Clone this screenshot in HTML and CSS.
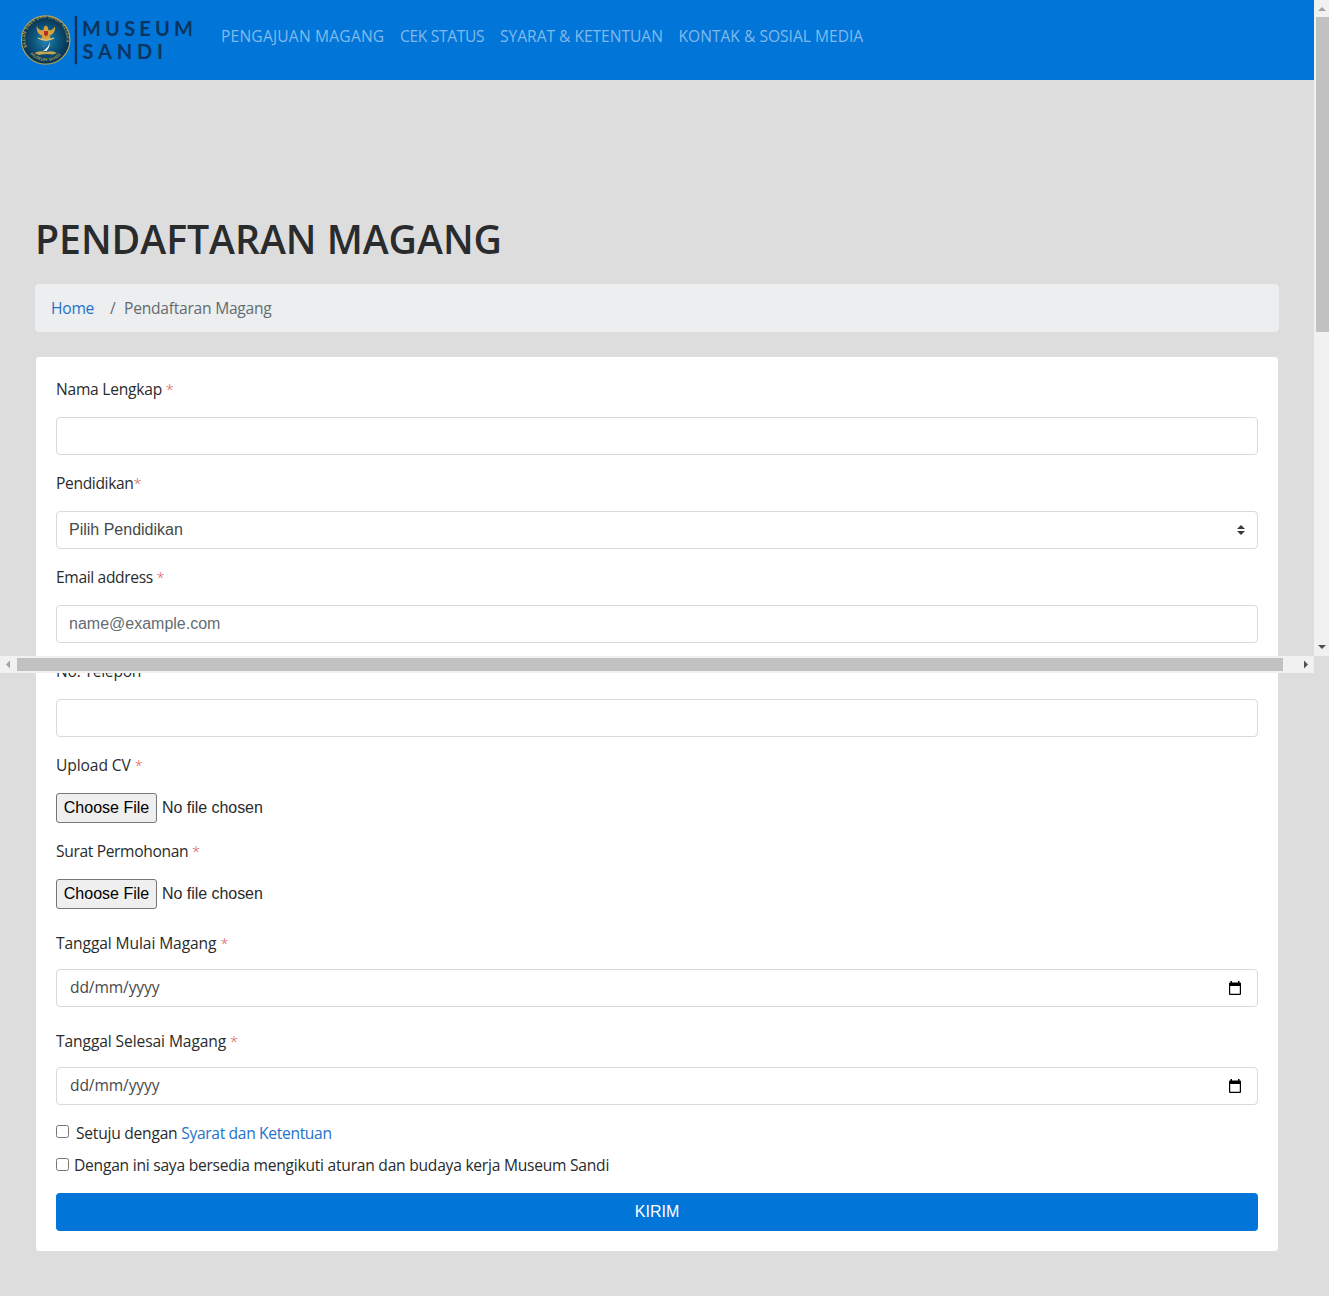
FILE: index.html
```html
<!DOCTYPE html>
<html lang="id">
<head>
<meta charset="utf-8">
<title>Pendaftaran Magang - Museum Sandi</title>
<link rel="stylesheet" href="styles.css">
</head>
<body>
<header class="navbar">
  <svg class="brand" width="176" height="56" viewBox="20 12 176 56" role="img" aria-label="Museum Sandi">
    <defs>
      <radialGradient id="seal"><stop offset="0" stop-color="#2386b5"/><stop offset=".5" stop-color="#0d567e"/><stop offset="1" stop-color="#092f4e"/></radialGradient>
      <path id="arcTop" d="M27 47 A20.5 20.5 0 1 1 64.500 47"/>
      <path id="arcBottom" d="M30 54 A21.5 21.5 0 0 0 62 54"/>
    </defs>
    <circle cx="45.7" cy="40" r="24.2" fill="url(#seal)" stroke="#a9a45b" stroke-width="1.2"/>
    <circle cx="45.7" cy="40" r="22.8" fill="none" stroke="#143b4e" stroke-width=".8"/>
    <text class="seal-text"><textPath href="#arcTop" textLength="76">BADAN SIBER DAN SANDI NEGARA</textPath></text>
    <text class="seal-text"><textPath href="#arcBottom" textLength="34">MUSEUM SANDI</textPath></text>
    <path d="M36.8 26 C38 29.5 41 31 43.5 30 L44 27 L45 25.8 L47 26 L48 28 L48.3 30 C51 31 54 29 55 26 C55.7 31 53 35 49.5 35.5 L51 39 L46 41 L41 39 L42.5 35.5 C38.5 35 36 31 36.8 26Z" fill="#d8a13a"/>
    <path d="M44 31h4v3.5l-2 2-2-2z" fill="#b92d29"/>
    <path d="M38 38 Q46 42.5 54 38" fill="none" stroke="#d7c78b" stroke-width="1.2"/>
    <path d="M50 41.5 Q49 47 43 51 L46.5 51 Q50 47 50 41.5Z" fill="#eef6f4"/>
    <path d="M41.5 46l3-1.5v3z" fill="#4b77aa"/>
    <path d="M34.5 53 Q39 50 45.7 52 Q52 50 57 53 L53 54.5 Q46 53.5 39 55Z" fill="#c6a750"/>
    <rect x="74.7" y="16" width="2.4" height="48.2" fill="#0b3560"/>
    <text class="brand-text" x="82" y="36" textLength="111">MUSEUM</text>
    <text class="brand-text" x="82.5" y="58.600" textLength="80.500">SANDI</text>
  </svg>
  <nav class="nav">
    <a class="n1">PENGAJUAN MAGANG</a>
    <a class="n2">CEK STATUS</a>
    <a class="n3">SYARAT &amp; KETENTUAN</a>
    <a class="n4">KONTAK &amp; SOSIAL MEDIA</a>
  </nav>
</header>
<main class="content">
  <h1>PENDAFTARAN MAGANG</h1>
  <div class="breadcrumb"><a class="home">Home</a><span class="slash">/</span><span class="here">Pendaftaran Magang</span></div>
  <form class="card">
    <div class="group"><label>Nama Lengkap <i>*</i></label><input class="control" type="text"></div>
    <div class="group"><label class="snug">Pendidikan<i>*</i></label>
      <div class="control select">Pilih Pendidikan<svg width="8" height="10" viewBox="0 0 4 5"><path fill="#343a40" d="M2 0L0 2h4zm0 5L0 3h4z"/></svg></div></div>
    <div class="group"><label class="snug">Email address <i>*</i></label><input class="control" type="text" placeholder="name@example.com"></div>
    <div class="group"><label>No. Telepon</label><input class="control" type="text"></div>
    <div class="group"><label class="loose">Upload CV <i>*</i></label><input class="file" type="file"></div>
    <div class="group"><label class="snug">Surat Permohonan <i>*</i></label><input class="file" type="file"></div>
    <div class="group dated"><label class="loose">Tanggal Mulai Magang <i>*</i></label>
      <div class="control date"><span>dd/mm/yyyy</span><svg width="14" height="15" viewBox="0 0 14 15"><path fill="#000" fill-rule="evenodd" d="M2.5 0h1.5v1.5h6V0h1.5v1.5H12q1 0 1 1V13q0 1-1 1H2q-1 0-1-1V2.5q0-1 1-1h.5zM2.2 5v7.8h9.6V5z"/></svg></div></div>
    <div class="group dated"><label class="loose">Tanggal Selesai Magang <i>*</i></label>
      <div class="control date"><span>dd/mm/yyyy</span><svg width="14" height="15" viewBox="0 0 14 15"><path fill="#000" fill-rule="evenodd" d="M2.5 0h1.5v1.5h6V0h1.5v1.5H12q1 0 1 1V13q0 1-1 1H2q-1 0-1-1V2.5q0-1 1-1h.5zM2.2 5v7.8h9.6V5z"/></svg></div></div>
    <div class="check agree"><input type="checkbox"><span>Setuju dengan <a>Syarat dan Ketentuan</a></span></div>
    <div class="check rules"><input type="checkbox"><span>Dengan ini saya bersedia mengikuti aturan dan budaya kerja Museum Sandi</span></div>
    <button class="submit" type="button">KIRIM</button>
  </form>
</main>
<div class="vbar"><svg width="15" height="17"><path d="M3 11h8L7 7z" fill="#a3a3a3"/></svg><div class="vthumb"></div><svg class="end" width="15" height="17"><path d="M3 6h8l-4 4z" fill="#505050"/></svg></div>
<div class="hbar"><svg width="17" height="17"><path d="M10 4.500v8L6 8.500z" fill="#a3a3a3"/></svg><div class="hthumb"></div><svg class="end" width="17" height="17"><path d="M7 4.500v8l4-4z" fill="#505050"/></svg></div>
</body>
</html>
```
FILE: styles.css
```css
* { box-sizing: border-box; }
html, body { margin: 0; height: 1296px; overflow: hidden; }
body {
  position: relative;
  background: #ddd;
  color: #292b2c;
  font: 15.6px/24px "Open Sans", sans-serif;
  letter-spacing: -.24px;
}
.navbar {
  width: 1314px; height: 80px;
  background: #0275d8;
  display: flex;
  padding: 12px 20px;
}
.brand { flex: none; letter-spacing: 0; }
.brand-text { font: 700 20px Lato, sans-serif; fill: #0b3560; }
.seal-text { font: 700 4px Lato, sans-serif; fill: #b3a452; }
.nav { display: flex; padding-left: 25px; padding-top: 12px; color: #81baec; letter-spacing: 0; }
.nav a { white-space: nowrap; flex: none; }
.n1 { width: 179px; letter-spacing: .19px; }
.n2 { width: 100px; letter-spacing: -.34px; }
.n3 { width: 178.500px; letter-spacing: -.03px; }
.content { width: 1314px; padding: 135px 35px 0; }
h1 { margin: 0; height: 69px; font-size: 39.200px; line-height: 48px; font-weight: 600; letter-spacing: -.03px; white-space: nowrap; }
.breadcrumb { height: 48px; padding: 12px 16px; background: #eceeef; border-radius: 4px; display: flex; color: #636c72; }
.breadcrumb a, .check a { color: #2472cb; }
.home { width: 59px; }
.slash { width: 14px; }
.card { margin: 24px 0 0; height: 896px; padding: 20px; background: #fff; border: 1px solid #dcdddd; border-radius: 4px; }
.group { display: flex; flex-direction: column; margin-bottom: 16px; }
.group label { height: 24px; margin-bottom: 16px; white-space: pre; }
.group .snug { letter-spacing: -.35px; }
.group .loose { letter-spacing: -.1px; }
.group i { color: #d9534f; font-style: normal; font-size: 14.500px; font-weight: 300; }
.control {
  display: flex; align-items: center; justify-content: space-between;
  width: 100%; height: 38px; padding: 0 12px;
  border: 1px solid #d8d9da; border-radius: 4px; background: #fff;
  font: 16px "Liberation Sans", sans-serif; letter-spacing: 0; color: #464a4c;
}
.control::placeholder { color: #636c72; opacity: 1; }
.date { font: 15.6px "Open Sans", sans-serif; letter-spacing: -.12px; padding: 0 15px 0 13px; }
.date span { padding-bottom: 2px; }
.file { display: block; height: 30px; font: 16px/24px "Liberation Sans", sans-serif; letter-spacing: -.04px; color: #292b2c; }
.file::file-selector-button {
  width: 101px; height: 30px; margin: 0 5px 0 0; padding: 0;
  font: inherit; color: #000; background: #efefef; border: 1px solid #767676; border-radius: 3px;
}
.group.dated { margin: 22px 0 0; }
.group.dated + .dated { margin-top: 22px; }
.dated label { margin-bottom: 15px; }
.group.dated label { margin-bottom: 14px; }
.check { display: flex; height: 24px; white-space: nowrap; }
.check span { margin-top: -1px; }
.check a { letter-spacing: -.33px; }
.check input { width: 13px; height: 13px; margin: 3px 7px 0 0; flex: none; }
.agree { margin-top: 17px; }
.rules { margin: 8px 0 15px; }
.rules input { margin: 4px 5px 0 0; }
.submit { width: 100%; height: 38px; border: 0; border-radius: 4px; background: #0275d8; color: #fff; font: 16px "Liberation Sans", sans-serif; }
/* Scrollbars lie over the page */
.vbar { position: absolute; left: 1314px; top: 0; width: 15px; height: 656px; background: #f1f1f1; display: flex; flex-direction: column; }
.vbar svg, .hbar svg { display: block; flex: none; }
.vbar svg { margin-left: 1px; }
.vthumb { height: 315px; margin-left: 2px; background: #c1c1c1; }
.vbar .end { margin-top: auto; }
.hbar { position: absolute; left: 0; top: 656px; width: 1314px; height: 17px; background: #f1f1f1; display: flex; }
.hthumb { width: 1266px; height: 13px; margin-top: 2px; background: #c1c1c1; }
.hbar .end { margin-left: auto; }
```
